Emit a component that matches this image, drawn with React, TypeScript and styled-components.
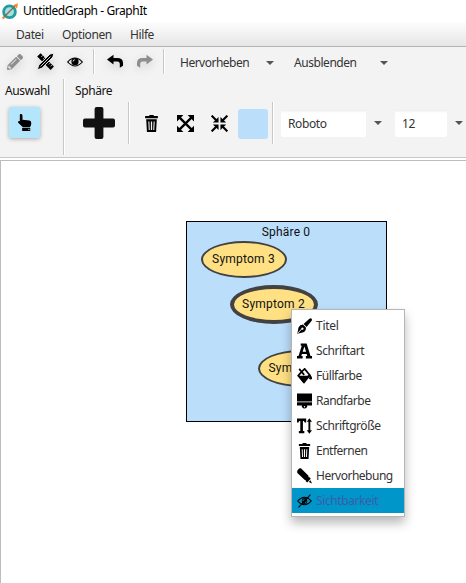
import React from "react";
import styled, { createGlobalStyle } from "styled-components";
import { FaPencilAlt } from "react-icons/fa";

const GlobalStyle = createGlobalStyle`
  * { box-sizing: border-box; }
  html, body { margin: 0; overflow: hidden; background: #fff; }
  svg { display: block; flex: none; }
`;

const Window = styled.div`
  width: 466px;
  height: 583px;
  display: flex;
  flex-direction: column;
  overflow: hidden;
  background: #fff;
  color: #333;
  font-family: "Noto Sans", "Open Sans", sans-serif;
  font-size: 12px;
  line-height: 16px;
  white-space: nowrap;
`;

const TitleBar = styled.header`
  height: 22px;
  display: flex;
  align-items: center;
  padding: 0 0 1px 2px;
  gap: 5px;
  color: #000;
`;

const Label = styled.span<{ $spacing?: number }>`
  letter-spacing: ${(p) => p.$spacing ?? -0.4}px;
`;

const MenuBar = styled.nav`
  height: 25px;
  display: flex;
  align-items: center;
  padding: 1px 0 0 16px;
  background: linear-gradient(#fdfdfd, #e6e6e6);
  border-bottom: 1px solid #b4b4b4;
`;

const MenuEntry = styled.div<{ $width: number }>`
  width: ${(p) => p.$width}px;
`;

const Toolbars = styled.section`
  height: 111px;
  background: #f3f3f3;
  border-bottom: 1px solid #c8c8c8;
`;

const TopTools = styled.div`
  height: 32px;
  display: flex;
  padding-top: 2px;
`;

const IconSlot = styled.div<{ $width: number; $muted?: boolean; $shadow?: boolean }>`
  width: ${(p) => p.$width}px;
  height: 25px;
  display: flex;
  align-items: center;
  justify-content: center;
  color: ${(p) => (p.$muted ? "#8e8e8e" : "#000")};
  filter: ${(p) => (p.$shadow ? "drop-shadow(0 3px 5px rgba(0,0,0,.17))" : "none")};
`;

const Separator = styled.div<{ $height: number }>`
  width: 2px;
  height: ${(p) => p.$height}px;
  flex: none;
  background: linear-gradient(90deg, #c8c8c8 50%, #fff 50%);
`;

const DropDown = styled.div<{ $width: number }>`
  width: ${(p) => p.$width}px;
  height: 28px;
  display: flex;
  align-items: center;
  justify-content: space-between;
`;

const Caret = styled.i`
  width: 8px;
  height: 4px;
  flex: none;
  background: #555;
  clip-path: polygon(0 0, 100% 0, 50% 100%);
`;

const MainTools = styled.div`
  height: 77px;
  display: flex;
`;

const ToolGroup = styled.div<{ $width: number; $left: number }>`
  width: ${(p) => p.$width}px;
  padding: 4px 0 0 ${(p) => p.$left}px;
  color: #111;
`;

const SelectButton = styled.button`
  width: 31px;
  height: 31px;
  display: flex;
  align-items: center;
  justify-content: center;
  margin: 8px 0 0 4px;
  padding: 0;
  border: 0;
  border-radius: 2px;
  background: #b3e5fc;
  color: #000;
  box-shadow: 0 1px 4px rgba(0, 0, 0, 0.3);
`;

const AddIcon = styled.div`
  margin: 8px 0 0 8px;
`;

const ToolRow = styled.div`
  height: 42px;
  margin-top: 23px;
  display: flex;
  align-items: center;
`;

const Actions = styled.div`
  width: 142px;
  display: flex;
  align-items: center;
  padding: 1px 0 0 4px;
`;

const Swatch = styled.div`
  width: 30px;
  height: 30px;
  margin-left: 2px;
  border-radius: 3px;
  background: #bbdefb;
`;

const Field = styled.div<{ $width: number; $gap: number }>`
  width: ${(p) => p.$width}px;
  height: 27px;
  margin: 1px 8px 0 ${(p) => p.$gap}px;
  padding: 6px 0 0 7px;
  border-radius: 2px;
  background: linear-gradient(#eee 0, #fff 3px);
`;

const Canvas = styled.main`
  position: relative;
  height: 423px;
  margin-top: 2px;
  border-top: 1px solid #bdbdbd;
  border-left: 1px solid #bdbdbd;
  background: #fff;
  color: #111;
  font-family: Roboto, sans-serif;
  letter-spacing: 0.2px;
`;

const Sphere = styled.div`
  position: absolute;
  left: 185px;
  top: 60px;
  width: 201px;
  height: 201px;
  padding: 2px 1px 0 0;
  border: 1px solid #000;
  background: #bbdefb;
  text-align: center;
`;

const Symptom = styled.div<{ $x: number; $y: number; $stroke: number; $clipped?: boolean }>`
  position: absolute;
  left: ${(p) => p.$x - p.$stroke / 2}px;
  top: ${(p) => p.$y - p.$stroke / 2}px;
  width: ${(p) => 84 + p.$stroke}px;
  height: ${(p) => 35 + p.$stroke}px;
  display: flex;
  align-items: center;
  justify-content: ${(p) => (p.$clipped ? "flex-start" : "center")};
  padding-left: ${(p) => (p.$clipped ? 9 : 0)}px;
  border: ${(p) => p.$stroke}px solid #424242;
  border-radius: 50%;
  background: #ffe082;
`;

const ContextMenu = styled.div`
  position: absolute;
  left: 290px;
  top: 148px;
  width: 114px;
  height: 208px;
  padding: 3px 0;
  border: 1px solid #b5b5b5;
  background: #fff;
  color: #333;
  font-family: "Noto Sans", "Open Sans", sans-serif;
  box-shadow: 0 6px 10px rgba(0, 0, 0, 0.28);
`;

const MenuItem = styled.div<{ $active?: boolean }>`
  height: 25px;
  display: flex;
  align-items: center;
  gap: 4px;
  padding-left: 5px;
  color: ${(p) => (p.$active ? "#3c5caa" : "#333")};
  background: ${(p) => (p.$active ? "#0096c9" : "transparent")};
  svg { color: #000; width: 15px; }
`;

type IconProps = { size?: number; children: React.ReactNode };
const Icon = ({ size = 16, children }: IconProps) => (
  <svg width={size} height={size} viewBox="0 0 16 16" preserveAspectRatio="none" fill="currentColor">{children}</svg>
);

const Logo = () => (
  <svg width="16" height="18" viewBox="0 0 16 18">
    <circle cx="7.5" cy="9.8" r="5.9" fill="#a5e0dc" stroke="#259b9e" strokeWidth="2.8" />
    <path d="M1 16L14 3" stroke="#8b6550" strokeWidth="1.2" />
    <path d="M11 3.2L16 1.2 15 6.4z" fill="#ef8c28" />
    <circle cx="1.5" cy="15.7" r="1.3" fill="#ef8c28" />
  </svg>
);

const DesignTools = () => (
  <Icon size={17}>
    <path d="M3.4.2L15.9 12.7 12.8 15.9.2 3.3z" />
    <path d="M5.5 2.2L4 3.7M7.3 4L5.8 5.5M12.6 9.3l-1.5 1.5M14.3 11l-1.5 1.5" stroke="#f3f3f3" strokeWidth=".7" />
    <path d="M.2 15.8L1.7 11.3 12.2 1 15.8.2 15 3.8 4.7 14.3z" stroke="#f3f3f3" strokeWidth=".9" />
    <path d="M3.4 12.6L12.6 3.4" stroke="#f3f3f3" strokeWidth=".8" />
  </Icon>
);

const EyeIcon = () => (
  <Icon>
    <path d="M.7 8Q8-1.3 15.3 8 8 17.3.7 8z" fill="none" stroke="currentColor" strokeWidth="1.3" transform="translate(0 1.2) scale(1 .85)" />
    <circle cx="8" cy="7.7" r="3.6" />
    <path d="M6.1 7.5q0-1.7 1.7-1.7" stroke="#fff" strokeWidth=".9" fill="none" />
  </Icon>
);

const UndoIcon = ({ flip = false }: { flip?: boolean }) => (
  <Icon>
    <path transform={flip ? "translate(16 0) scale(-1 1)" : undefined} d="M6.5.8L0 5.6l6.5 4.9V7.4h3.7q2.6 0 2.6 2.7v3.7l3.2-2V9q0-5-5.8-5H6.5z" />
  </Icon>
);

const HandIcon = () => (
  <Icon size={17}>
    <path d="M4.2 0Q6-.2 6.1 1.5v3.8l6.5.8q1.8.3 1.8 2.5 0 2-1.2 3.8H6.5L2.1 8.3q-.7-1.7 1-1.7l.5.2V1Q3.7.2 4.2 0z" />
    <path d="M5.8 13.1h7.6V16H5.8z" /><path d="M11.8 14.2h.8v.8h-.8z" fill="#fff" />
  </Icon>
);

const PlusIcon = () => (
  <Icon size={32}><path d="M6.8 0h2.4q1 0 1 1v4.8H15q1 0 1 1v2.4q0 1-1 1h-4.8V15q0 1-1 1H6.8q-1 0-1-1v-4.8H1q-1 0-1-1V6.8q0-1 1-1h4.8V1q0-1 1-1z" /></Icon>
);

const TrashIcon = ({ size = 16 }: { size?: number }) => (
  <Icon size={size}>
    <path fillRule="evenodd" d="M5.5 1l.8-1h3.4l.8 1H14v2H2V1zM3 4h10l-.7 12H3.7zM5 6.2l.4 7.8h1L6 6.2zm2.4 0V14h1.2V6.2zm2.6 0L9.6 14h1l.4-7.8z" />
  </Icon>
);

const ExpandIcon = () => (
  <Icon size={17}>
    <path d="M2 2l12 12M14 2L2 14" stroke="currentColor" strokeWidth="2.2" />
    <path d="M0 0h6L0 6zM10 0h6v6zM0 10l6 6H0zM16 10v6h-6z" />
  </Icon>
);

const CompressIcon = () => (
  <Icon size={17}>
    <path d="M.6.6l5 5M15.4.6l-5 5M.6 15.4l5-5M15.4 15.4l-5-5" stroke="currentColor" strokeWidth="2" />
    <path d="M7.1 1.8v5.3H1.8zM8.9 1.8v5.3h5.3zM1.8 8.9h5.3v5.3zM8.9 8.9h5.3l-5.3 5.3z" />
  </Icon>
);

const PenIcon = () => (
  <Icon>
    <path d="M13.2.7q1.5-1 2.4 0 .8 1-.2 2.4L10.2 9 7 6z" />
    <path fillRule="evenodd" d="M6.3 6.6l3.2 3q.4 3.3-2.6 4.7L.3 15.8 1.6 9.4Q3 6.6 6.3 6.6zM5.7 9.4a1.2 1.2 0 1 0 .1 0zM1.2 15.2l3.7-3.6-.5-.5-3.6 3.6z" />
  </Icon>
);

const FontIcon = () => (
  <Icon>
    <path fillRule="evenodd" d="M5.5.5h4.8L14.4 13H16v2.4H9.5V13h1.4l-.6-2H5.2l-.6 2H6v2.4H0V13h1.6L5.1 2.8H4V.5zM7.9 3.5L6 8.7h3.7z" />
  </Icon>
);

const FillIcon = () => (
  <Icon>
    <path d="M2.3.8l5.4 6M4.8 3.9L8.2.9l5.2 6L7 13.8 1.4 7.6z" fill="none" stroke="currentColor" strokeWidth="1.8" />
    <path d="M.4 7.7h13.9L7.5 15.7z" />
    <path d="M14.2 6.6q1.8 2.5 1.8 3.6 0 1.3-1.5 1.3T13 10.2q0-1.1 1.2-3.6z" />
  </Icon>
);

const BrushIcon = () => (
  <Icon>
    <path d="M0 .6h16v7.6H0zM0 9.2h16v3.4h-5.2V14q-2.8 3-5.6 0v-1.4H0z" />
    <path d="M0 8.1h16v1.1H0z" fill="#777" />
    <circle cx="8" cy="13.8" r=".7" fill="#fff" />
  </Icon>
);

const TextSizeIcon = () => (
  <Icon>
    <path d="M0 .6h9.8v4H8.2L7.4 3H6.3v10h1.5v2.3H2V13h1.5V3H2.4l-.8 1.6H0zM13.2.2L16 3.8h-1.8v8.4H16l-2.8 3.6-2.8-3.6h1.8V3.8h-1.8z" />
  </Icon>
);

const HighlighterIcon = () => (
  <Icon><path d="M4.2.3L12 7.5q.7 1.5-.5 3T8.3 12L.4 5Q-.3 3.4 1 1.7T4.2.3zM12.8 8.8l1.9 2-3.8 3.6-2-1.7zM14.4 12.2l1.6 3.4-3.4-1.5z" /></Icon>
);

const HiddenIcon = () => (
  <Icon>
    <path d="M.7 8Q8-.9 15.3 8 8 16.9.7 8z" fill="none" stroke="currentColor" strokeWidth="1.2" transform="translate(0 1.2) scale(1 .85)" />
    <circle cx="8" cy="8" r="2.9" />
    <path d="M6.3 8.2q0-1.7 1.7-1.8M8.5 9.8q1.2-.4 1.3-1.4" fill="none" stroke="#0096c9" strokeWidth=".9" />
    <path d="M1.6 14.4L14.4 1.6" stroke="currentColor" strokeWidth="1.2" />
  </Icon>
);

const menuItems = [
  { text: "Titel", icon: <PenIcon />, spacing: -0.25 },
  { text: "Schriftart", icon: <FontIcon />, spacing: -0.4 },
  { text: "Füllfarbe", icon: <FillIcon />, spacing: -0.45 },
  { text: "Randfarbe", icon: <BrushIcon />, spacing: -0.5 },
  { text: "Schriftgröße", icon: <TextSizeIcon />, spacing: -0.45 },
  { text: "Entfernen", icon: <TrashIcon />, spacing: -0.5 },
  { text: "Hervorhebung", icon: <HighlighterIcon />, spacing: -0.5 },
  { text: "Sichtbarkeit", icon: <HiddenIcon />, spacing: -0.4 },
];

export default function App() {
  return (
    <Window>
      <GlobalStyle />
      <TitleBar><Logo /><Label $spacing={-0.43}>UntitledGraph - GraphIt</Label></TitleBar>
      <MenuBar>
        <MenuEntry $width={46}><Label>Datei</Label></MenuEntry>
        <MenuEntry $width={68}><Label>Optionen</Label></MenuEntry>
        <MenuEntry $width={40}><Label>Hilfe</Label></MenuEntry>
      </MenuBar>
      <Toolbars>
        <TopTools>
          <IconSlot $width={30} $muted $shadow><FaPencilAlt size={16} /></IconSlot>
          <IconSlot $width={30} $shadow><DesignTools /></IconSlot>
          <IconSlot $width={30} $shadow><EyeIcon /></IconSlot>
          <IconSlot $width={3} />
          <Separator $height={25} />
          <IconSlot $width={5} />
          <IconSlot $width={30} $shadow><UndoIcon /></IconSlot>
          <IconSlot $width={30} $muted $shadow><UndoIcon flip /></IconSlot>
          <IconSlot $width={3} />
          <Separator $height={25} />
          <IconSlot $width={15} />
          <DropDown $width={94}><Label $spacing={-0.5}>Hervorheben</Label><Caret /></DropDown>
          <IconSlot $width={20} />
          <DropDown $width={94}><Label $spacing={-0.45}>Ausblenden</Label><Caret /></DropDown>
        </TopTools>
        <MainTools>
          <ToolGroup $width={63} $left={5}>
            <Label>Auswahl</Label>
            <SelectButton><HandIcon /></SelectButton>
          </ToolGroup>
          <Separator $height={76} />
          <ToolGroup $width={63} $left={10}>
            <Label>Sphäre</Label>
            <AddIcon><PlusIcon /></AddIcon>
          </ToolGroup>
          <ToolRow>
            <Separator $height={42} />
            <Actions>
              <IconSlot $width={34}><TrashIcon size={17} /></IconSlot>
              <IconSlot $width={34}><ExpandIcon /></IconSlot>
              <IconSlot $width={34}><CompressIcon /></IconSlot>
              <Swatch />
            </Actions>
            <Separator $height={42} />
            <Field $width={85} $gap={7}><Label>Roboto</Label></Field>
            <Caret />
            <Field $width={52} $gap={13}><Label>12</Label></Field>
            <Caret />
          </ToolRow>
        </MainTools>
      </Toolbars>
      <Canvas>
        <Sphere>Sphäre 0</Sphere>
        <Symptom $x={200.5} $y={80.5} $stroke={2}>Symptom 3</Symptom>
        <Symptom $x={230.5} $y={125.5} $stroke={4}>Symptom 2</Symptom>
        <Symptom $x={257.5} $y={189.5} $stroke={2} $clipped>Sym</Symptom>
        <ContextMenu>
          {menuItems.map((item) => (
            <MenuItem key={item.text} $active={item.text === "Sichtbarkeit"}>
              {item.icon}<Label $spacing={item.spacing}>{item.text}</Label>
            </MenuItem>
          ))}
        </ContextMenu>
      </Canvas>
    </Window>
  );
}
